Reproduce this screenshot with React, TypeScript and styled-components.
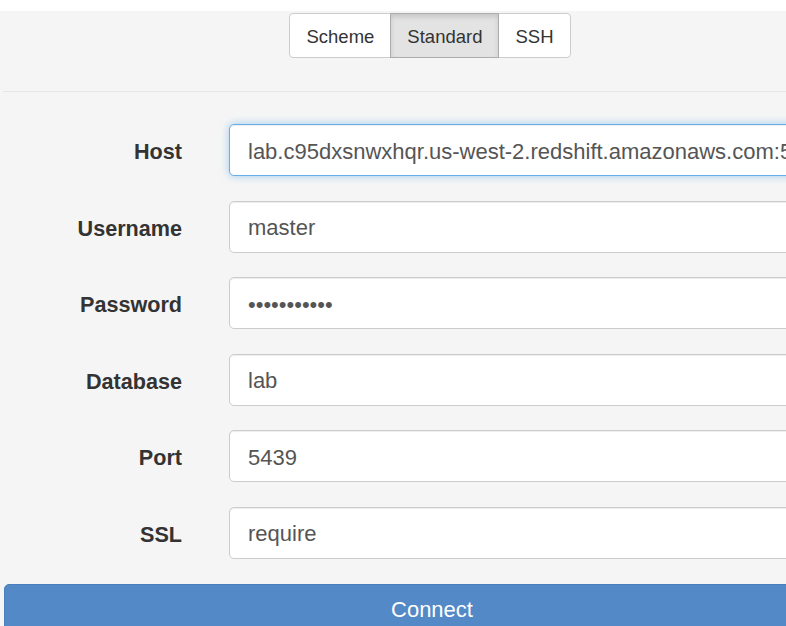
import React from "react";
import styled, { createGlobalStyle } from "styled-components";

const Global = createGlobalStyle`
  html, body { margin: 0; padding: 0; background: #ffffff; overflow: hidden; }
  body { font-family: "Liberation Sans", Arial, Helvetica, sans-serif; }
  * { box-sizing: border-box; }
`;

const Page = styled.div`
  padding-top: 11px;
  width: 786px;
  height: 626px;
  overflow: hidden;
`;

const Panel = styled.div`
  width: 860px;
  background: #f5f5f5;
  min-height: 615px;
`;

const Header = styled.div`
  margin-left: 3px;
  padding: 2px 0 33px;
  border-bottom: 1px solid #e6e6e6;
  display: flex;
  justify-content: center;
`;

const Group = styled.div`
  display: flex;
  margin-left: -3px;
`;

const SegButton = styled.button<{ $active?: boolean; $pos: "first" | "mid" | "last" }>`
  height: 45px;
  padding: 2px 16px 0;
  font-family: "Liberation Sans", Arial, sans-serif;
  font-size: 18.5px;
  color: #333;
  background: ${(p) => (p.$active ? "#e3e3e3" : "#fff")};
  border: 1px solid ${(p) => (p.$active ? "#adadad" : "#ccc")};
  box-shadow: ${(p) => (p.$active ? "inset 0 3px 5px rgba(0,0,0,0.125)" : "none")};
  margin-left: ${(p) => (p.$pos === "first" ? 0 : -1)}px;
  border-radius: ${(p) =>
    p.$pos === "first" ? "4px 0 0 4px" : p.$pos === "last" ? "0 4px 4px 0" : "0"};
  position: relative;
  z-index: ${(p) => (p.$active ? 1 : 0)};
`;

const Form = styled.div`
  padding: 32px 0 0 3px;
  display: grid;
  grid-template-columns: 179px 1fr;
  column-gap: 47px;
  row-gap: 24.5px;
  align-items: center;
`;

const Label = styled.label`
  text-align: right;
  font-weight: bold;
  font-size: 21.6px;
  color: #333;
  padding-top: 4px;
`;

const Field = styled.input<{ $focus?: boolean }>`
  height: 52px;
  width: 100%;
  padding: 3px 19px 0 18px;
  font-family: "Liberation Sans", Arial, sans-serif;
  font-size: 22px;
  color: #555;
  background: #fff;
  border: 1px solid ${(p) => (p.$focus ? "#66afe9" : "#ccc")};
  border-radius: 5px;
  box-shadow: ${(p) =>
    p.$focus
      ? "inset 0 1px 1px rgba(0,0,0,0.075), 0 0 8px rgba(102,175,233,0.6)"
      : "inset 0 1px 1px rgba(0,0,0,0.075)"};
  outline: none;
`;

const Footer = styled.div`
  padding: 25px 0 0 4px;
`;

const Connect = styled.button`
  width: 100%;
  height: 52px;
  padding-top: 2px;
  background: #5389c6;
  border: 1px solid #4a7fbb;
  border-radius: 5px;
  color: #fff;
  font-family: "Liberation Sans", Arial, sans-serif;
  font-size: 22px;
`;

const fields: { label: string; value: string; type?: string; focus?: boolean }[] = [
  { label: "Host", value: "lab.c95dxsnwxhqr.us-west-2.redshift.amazonaws.com:5439", focus: true },
  { label: "Username", value: "master" },
  { label: "Password", value: "masterpassw", type: "password" },
  { label: "Database", value: "lab" },
  { label: "Port", value: "5439" },
  { label: "SSL", value: "require" },
];

export default function App() {
  return (
    <Page>
      <Global />
      <Panel>
        <Header>
          <Group>
            <SegButton $pos="first">Scheme</SegButton>
            <SegButton $pos="mid" $active>Standard</SegButton>
            <SegButton $pos="last">SSH</SegButton>
          </Group>
        </Header>
        <Form>
          {fields.map((f) => (
            <React.Fragment key={f.label}>
              <Label>{f.label}</Label>
              <Field type={f.type ?? "text"} value={f.value} readOnly $focus={f.focus} />
            </React.Fragment>
          ))}
        </Form>
        <Footer>
          <Connect>Connect</Connect>
        </Footer>
      </Panel>
    </Page>
  );
}
